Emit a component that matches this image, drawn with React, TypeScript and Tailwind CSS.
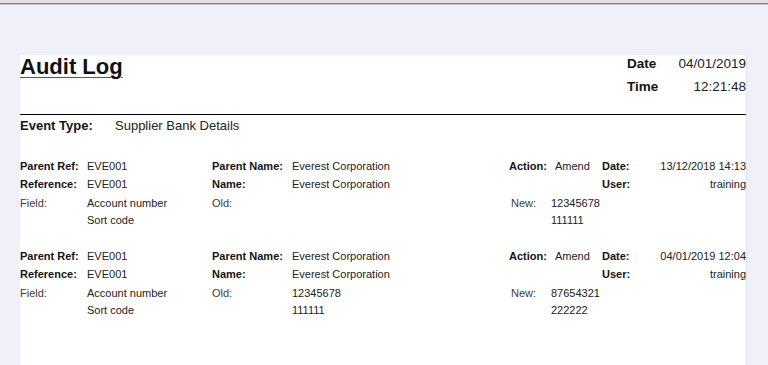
import React from "react";

type AuditRecord = {
  parentRef: string;
  parentName: string;
  reference: string;
  name: string;
  action: string;
  date: string;
  user: string;
  fields: string[];
  oldValues: string[];
  newValues: string[];
};

const records: AuditRecord[] = [
  {
    parentRef: "EVE001",
    parentName: "Everest Corporation",
    reference: "EVE001",
    name: "Everest Corporation",
    action: "Amend",
    date: "13/12/2018 14:13",
    user: "training",
    fields: ["Account number", "Sort code"],
    oldValues: [],
    newValues: ["12345678", "111111"],
  },
  {
    parentRef: "EVE001",
    parentName: "Everest Corporation",
    reference: "EVE001",
    name: "Everest Corporation",
    action: "Amend",
    date: "04/01/2019 12:04",
    user: "training",
    fields: ["Account number", "Sort code"],
    oldValues: ["12345678", "111111"],
    newValues: ["87654321", "222222"],
  },
];

function Lines({ items }: { items: string[] }) {
  return (
    <div className="flex flex-col">
      {items.map((t, i) => (
        <span key={i} className="leading-[17px] whitespace-nowrap">
          {t}
        </span>
      ))}
    </div>
  );
}

function RecordBlock({ r }: { r: AuditRecord }) {
  const label = "font-bold text-[#141414] whitespace-nowrap";
  const value = "text-[#222] whitespace-nowrap";
  return (
    <div className="text-[11px]">
      <div className="grid grid-cols-[67px_125px_80px_217px_46px_47px_40px_104px] leading-[18px]">
        <span className={label}>Parent Ref:</span>
        <span className={value}>{r.parentRef}</span>
        <span className={label}>Parent Name:</span>
        <span className={value}>{r.parentName}</span>
        <span className={label}>Action:</span>
        <span className={value}>{r.action}</span>
        <span className={label}>Date:</span>
        <span className={`${value} text-right`}>{r.date}</span>

        <span className={label}>Reference:</span>
        <span className={value}>{r.reference}</span>
        <span className={label}>Name:</span>
        <span className={value}>{r.name}</span>
        <span />
        <span />
        <span className={label}>User:</span>
        <span className={`${value} text-right`}>{r.user}</span>
      </div>
      <div className="mt-[2px] grid grid-cols-[67px_125px_80px_219px_40px_1fr] text-[#222]">
        <span className="leading-[17px] text-[#3c3c3c]">Field:</span>
        <Lines items={r.fields} />
        <span className="leading-[17px] text-[#3c3c3c]">Old:</span>
        <Lines items={r.oldValues} />
        <span className="leading-[17px] text-[#3c3c3c]">New:</span>
        <Lines items={r.newValues} />
      </div>
    </div>
  );
}

export default function App() {
  return (
    <div className="flex h-[365px] w-full flex-col overflow-hidden bg-[#f0f0fa] font-[family-name:'Liberation_Sans',Arial,sans-serif]">
      {/* window chrome strip */}
      <div className="h-[3px] bg-[#e3e1da]" />
      <div className="h-[1px] bg-[#858585]" />
      <div className="h-[1px] bg-[#c6c6cc]" />

      {/* report page */}
      <div className="ml-[20px] mt-[50px] w-[727px] flex-1 border-r border-[#e3e3f1] bg-white">
        <div className="flex h-[60px] items-start justify-between border-b border-black">
          <h1 className="mt-[1px] text-[22px] font-bold leading-[22px] text-[#111] underline decoration-[#555] decoration-1 underline-offset-[3px]">
            Audit Log
          </h1>
          <div className="grid grid-cols-[38px_81px] content-start gap-y-[5px] text-[13.5px] leading-[18px]">
            <span className="font-bold text-[#141414]">Date</span>
            <span className="text-right text-[#222]">04/01/2019</span>
            <span className="font-bold text-[#141414]">Time</span>
            <span className="text-right text-[#222]">12:21:48</span>
          </div>
        </div>

        <div className="mt-[2px] flex text-[13px] leading-[18px]">
          <span className="w-[95px] font-bold text-[#141414]">Event Type:</span>
          <span className="text-[#222]">Supplier Bank Details</span>
        </div>

        <div className="mt-[22px] flex flex-col gap-[18px]">
          {records.map((r, i) => (
            <RecordBlock key={i} r={r} />
          ))}
        </div>
      </div>
    </div>
  );
}
